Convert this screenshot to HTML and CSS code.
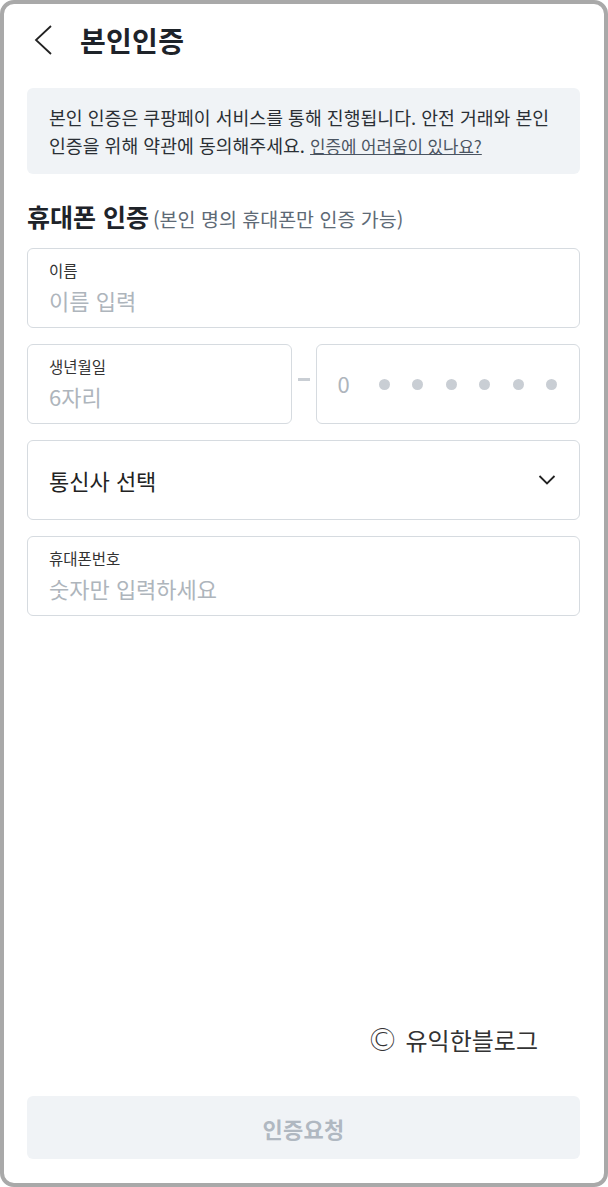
FILE: index.html
```html
<!DOCTYPE html>
<html lang="ko">
<head>
<meta charset="utf-8">
<title>본인인증</title>
<link rel="stylesheet" href="styles.css">
</head>
<body>
<div class="frame">
  <header class="header">
    <svg class="back" width="20" height="32" viewBox="0 0 20 32"><path d="M18 2 L3 16 L18 30" fill="none" stroke="#222" stroke-width="1.8"/></svg>
    <h1 class="title">본인인증</h1>
  </header>

  <div class="notice">
    본인 인증은 쿠팡페이 서비스를 통해 진행됩니다. 안전 거래와 본인 인증을 위해 약관에 동의해주세요. <a class="link">인증에 어려움이 있나요?</a>
  </div>

  <h2 class="section">휴대폰 인증<span class="section-sub">(본인 명의 휴대폰만 인증 가능)</span></h2>

  <div class="field">
    <span class="label">이름</span>
    <span class="ph">이름 입력</span>
  </div>

  <div class="row">
    <div class="field">
      <span class="label">생년월일</span>
      <span class="ph">6자리</span>
    </div>
    <div class="dash-wrap"><span class="dash"></span></div>
    <div class="field field-rrn">
      <span class="ph">0</span>
      <span class="dots"><i></i><i></i><i></i><i></i><i></i><i></i></span>
    </div>
  </div>

  <div class="field field-select">
    <span class="select-text">통신사 선택</span>
    <svg class="chev" width="18" height="12" viewBox="0 0 18 12"><path d="M1.5 2 L9 9.5 L16.5 2" fill="none" stroke="#222" stroke-width="1.8"/></svg>
  </div>

  <div class="field">
    <span class="label">휴대폰번호</span>
    <span class="ph">숫자만 입력하세요</span>
  </div>

  <div class="spacer"></div>

  <div class="mark"><span class="copy">©</span><span>유익한블로그</span></div>

  <button class="submit">인증요청</button>
</div>
</body>
</html>
```

FILE: styles.css
```css
* { box-sizing: border-box; }
html, body { margin: 0; padding: 0; background: #fff; }
body {
  font-family: "Noto Sans CJK KR", "Noto Sans", sans-serif;
  color: #222;
}
.frame {
  height: 1187px;
  border: 4px solid #a9a9a9;
  border-radius: 14px;
  padding: 0 24px 24px 23px;
  display: flex;
  flex-direction: column;
}
.header {
  height: 72px;
  display: flex;
  align-items: center;
  margin-bottom: 12px;
}
.back { margin-left: 6px; margin-right: 27px; }
.title {
  margin: 0;
  font-size: 28px;
  font-weight: 700;
  color: #1e2329;
  letter-spacing: 0.3px;
}
.notice {
  background: #f0f3f6;
  border-radius: 6px;
  padding: 15px 16px 14px 22px;
  font-size: 18.3px;
  line-height: 28px;
  color: #2a2f35;
  word-break: keep-all;
}
.link {
  font-size: 16.8px;
  line-height: 28px;
  color: #4a5461;
  text-decoration: underline;
}
.section {
  margin: 25px 0 15px;
  height: 34px;
  font-size: 25px;
  line-height: 34px;
  font-weight: 700;
  color: #1e2329;
  white-space: nowrap;
}
.section-sub {
  font-size: 19.5px;
  font-weight: 400;
  color: #5e6a76;
  margin-left: 4px;
}
.field {
  height: 80px;
  border: 1px solid #d6dbe0;
  border-radius: 6px;
  padding: 0 21px 2px;
  display: flex;
  flex-direction: column;
  justify-content: center;
  gap: 5px;
  margin-bottom: 16px;
}
.label {
  font-size: 15.5px;
  line-height: 20px;
  color: #333;
}
.ph {
  font-size: 22px;
  line-height: 30px;
  color: #aeb5bc;
}
.row {
  display: grid;
  grid-template-columns: 1fr 24px 1fr;
}
.dash-wrap {
  height: 80px;
  display: flex;
  align-items: center;
  justify-content: center;
}
.dash {
  display: block;
  width: 12px;
  height: 3px;
  background: #c9ced4;
  margin-top: -10px;
}
.field-rrn {
  flex-direction: row;
  align-items: center;
  justify-content: flex-start;
  gap: 0;
  padding: 0 16px 0 21px;
}
.field-rrn .ph { margin-top: -2px; }
.dots {
  display: flex;
  gap: 22.5px;
  margin-left: 29px;
}
.dots i {
  display: block;
  width: 11px;
  height: 11px;
  border-radius: 50%;
  background: #c9ced4;
}
.field-select {
  flex-direction: row;
  align-items: center;
  justify-content: space-between;
  padding: 0 23px 0 21px;
}
.select-text {
  font-size: 22px;
  color: #222;
}
.spacer { flex: 1; }
.mark {
  align-self: flex-end;
  margin-right: 42px;
  font-size: 24px;
  line-height: 32px;
  color: #333;
  margin-bottom: 40px;
  display: flex;
  align-items: center;
}
.copy {
  font-family: "DejaVu Sans", sans-serif;
  font-size: 32px;
  line-height: 32px;
  font-weight: 300;
  margin-right: 7px;
}
.submit {
  height: 63px;
  border: 0;
  border-radius: 6px;
  background: #f0f3f6;
  font-family: inherit;
  font-size: 22px;
  font-weight: 700;
  color: #b0b8c1;
  letter-spacing: 0.3px;
}
```
